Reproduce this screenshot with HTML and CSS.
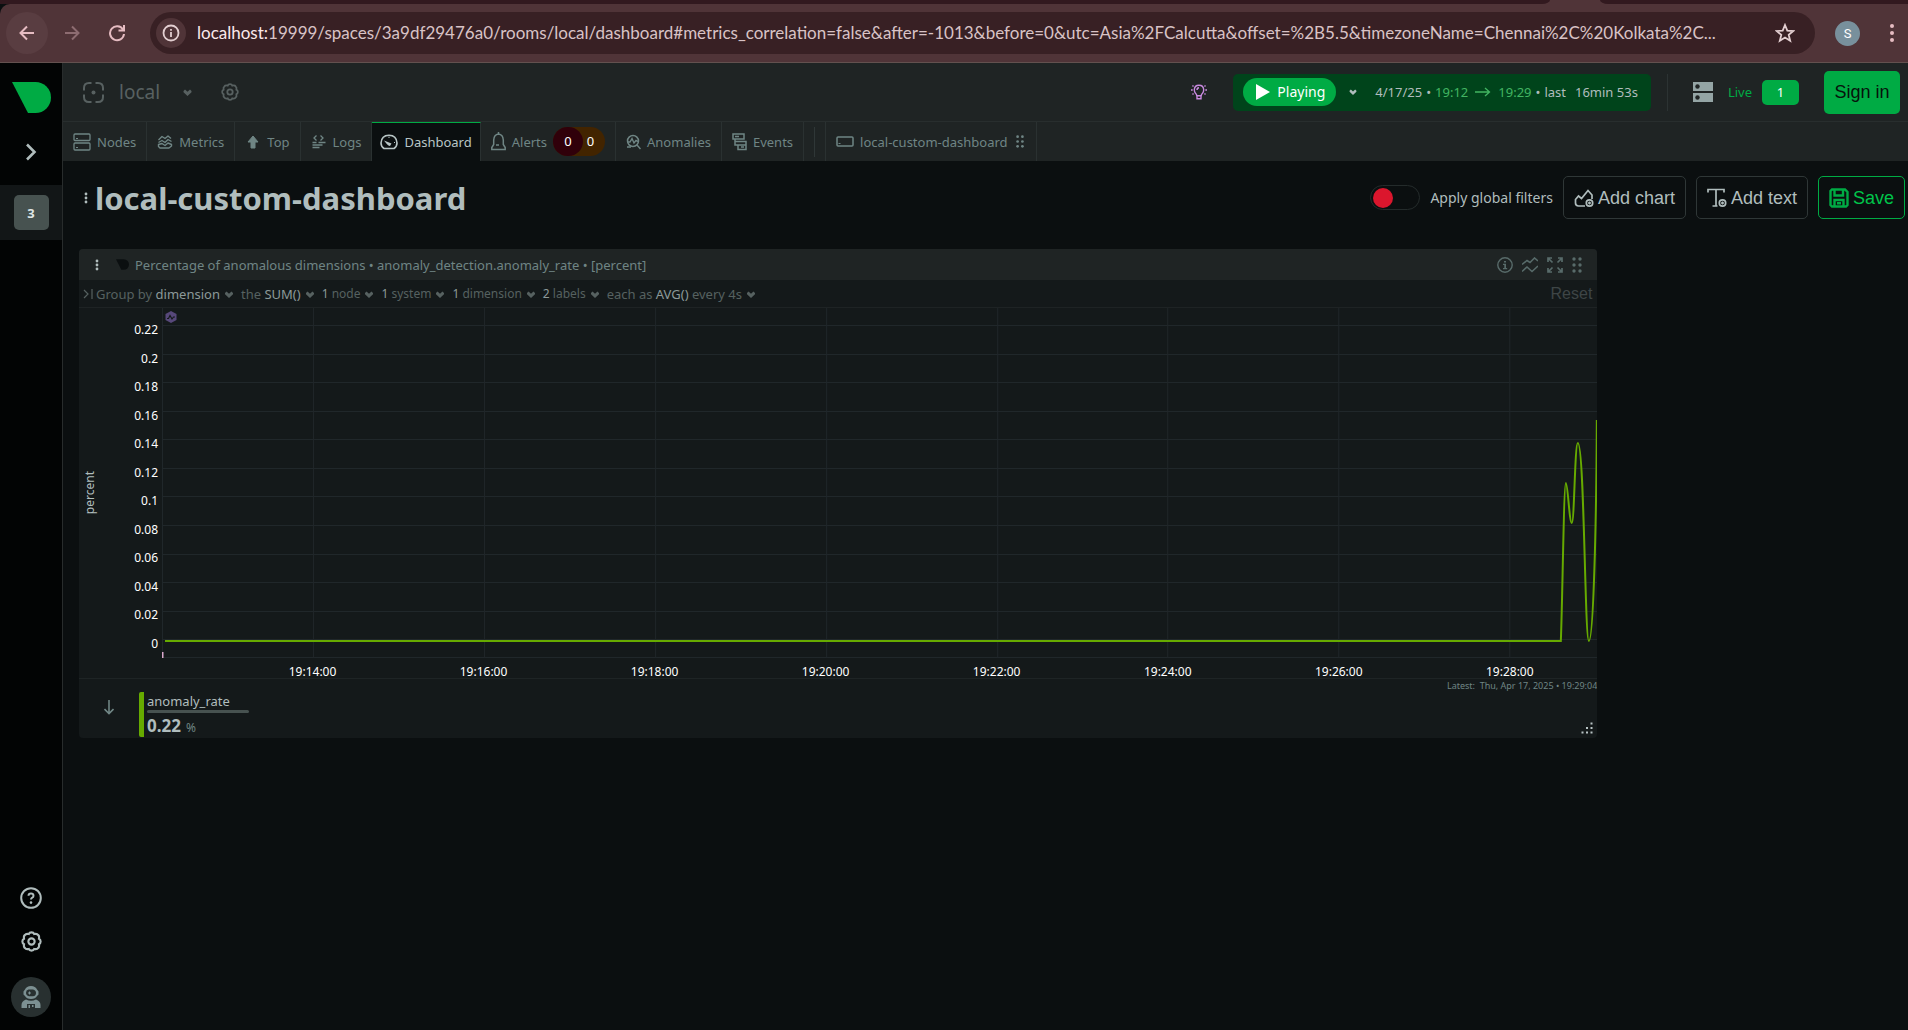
FILE: index.html
```html
<!DOCTYPE html>
<html lang="en">
<head>
<meta charset="utf-8">
<title>local-custom-dashboard</title>
<link rel="stylesheet" href="styles.css">
</head>
<body>
<svg class="defs" aria-hidden="true">
  <symbol id="chev" viewBox="0 0 8 7"><path d="M0 2 1.500.500 4 2.800 6.500.500 8 2 8 3.200 4 7 0 3.200Z" fill="currentColor"/></symbol>
  <symbol id="gear" viewBox="0 0 20 20"><g fill="none" stroke="currentColor" stroke-width="2"><path d="M10 1.300Q12 1.300 12.600 2.900 15.500 2.300 16.200 3.800 17.700 4.600 17.100 7.400 18.700 8.200 18.700 10 18.700 11.800 17.100 12.600 17.700 15.400 16.200 16.200 15.400 17.700 12.600 17.100 12 18.700 10 18.700 8 18.700 7.400 17.100 4.600 17.700 3.800 16.200 2.300 15.400 2.900 12.600 1.300 11.800 1.300 10 1.300 8.200 2.900 7.400 2.300 4.600 3.800 3.800 4.600 2.300 7.400 2.900 8 1.300 10 1.300Z"/><circle cx="10" cy="10" r="3"/></g></symbol>
  <symbol id="mark" viewBox="0 0 39 31"><path d="M0 0H23.500A15.500 15.500 0 0 1 23.500 31H16Z" fill="currentColor"/></symbol>
  <symbol id="grip" viewBox="0 0 10 16"><g fill="currentColor"><circle cx="2" cy="2" r="1.700"/><circle cx="8" cy="2" r="1.700"/><circle cx="2" cy="8" r="1.700"/><circle cx="8" cy="8" r="1.700"/><circle cx="2" cy="14" r="1.700"/><circle cx="8" cy="14" r="1.700"/></g></symbol>
  <symbol id="dots" viewBox="0 0 4 12"><g fill="currentColor"><circle cx="2" cy="2" r="1.400"/><circle cx="2" cy="6" r="1.400"/><circle cx="2" cy="10" r="1.400"/></g></symbol>
</svg>

<div class="tabstrip"><span class="strip-left"></span><span class="strip-right"></span></div>
<div class="browser">
  <button class="nav nav-back" aria-label="Back"><svg width="16" height="16" viewBox="0 0 16 16"><path d="M15 8H2M8 1.500 1.500 8 8 14.500" fill="none" stroke="currentColor" stroke-width="2"/></svg></button>
  <button class="nav nav-fwd" aria-label="Forward"><svg width="16" height="16" viewBox="0 0 16 16"><path d="M1 8H14M8 1.500 14.500 8 8 14.500" fill="none" stroke="currentColor" stroke-width="2"/></svg></button>
  <button class="nav" aria-label="Reload"><svg width="18" height="18" viewBox="0 0 18 18"><path d="M15 5.500A7 7 0 1 0 16 10M16 1V6.500H10.500" fill="none" stroke="currentColor" stroke-width="2"/></svg></button>
  <div class="omnibox">
    <span class="site-info"><svg width="18" height="18" viewBox="0 0 18 18"><circle cx="9" cy="9" r="7.500" fill="none" stroke="currentColor" stroke-width="1.800"/><path d="M9 8V13M9 5V6.800" stroke="currentColor" stroke-width="1.800"/></svg></span>
    <span class="url"><b>localhost:</b>19999/spaces/3a9df29476a0/rooms/local/dashboard#metrics_correlation=false&amp;after=-1013&amp;before=0&amp;utc=Asia%2FCalcutta&amp;offset=%2B5.5&amp;timezoneName=Chennai%2C%20Kolkata%2C...</span>
    <button class="star" aria-label="Bookmark"><svg width="20" height="20" viewBox="0 0 20 20"><path d="M10 2 12.300 7.600 18.300 8 13.700 11.900 15.200 17.700 10 14.500 4.800 17.700 6.300 11.900 1.700 8 7.700 7.600Z" fill="none" stroke="currentColor" stroke-width="1.800"/></svg></button>
  </div>
  <span class="profile">S</span>
  <button class="more" aria-label="Menu"><svg width="6" height="20" viewBox="0 0 6 20"><g fill="currentColor"><circle cx="3" cy="3" r="2"/><circle cx="3" cy="10" r="2"/><circle cx="3" cy="17" r="2"/></g></svg></button>
</div>

<div class="app">
  <aside class="side">
    <a class="logo" href="#" aria-label="Home"><svg width="39" height="31"><use href="#mark"/></svg></a>
    <button class="expand" aria-label="Expand"><svg width="12" height="18" viewBox="0 0 12 18"><path d="M2 1.500 9.500 9 2 16.500" fill="none" stroke="currentColor" stroke-width="2.600"/></svg></button>
    <div class="space"><button class="space-badge">3</button></div>
    <div class="side-foot">
      <button aria-label="Help"><svg width="22" height="22" viewBox="0 0 22 22"><circle cx="11" cy="11" r="9.800" fill="none" stroke="currentColor" stroke-width="2"/><path d="M8.500 8.700Q8.600 6.500 11 6.500T13.500 8.700Q13.500 10 12.200 10.700 11 11.300 11 12.600" fill="none" stroke="currentColor" stroke-width="2"/><circle cx="11" cy="15.600" r="1.300" fill="currentColor"/></svg></button>
      <button aria-label="Settings"><svg width="21" height="21"><use href="#gear"/></svg></button>
      <button class="user" aria-label="Account"><svg width="20" height="24" viewBox="0 0 20 24"><g fill="currentColor"><path fill-rule="evenodd" d="M10 1Q14.500 1 16 4.500L17.500 6.500V9.500L16 11Q14.500 14 10 14T4 11L2.500 9.500V6.500L4 4.500Q5.500 1 10 1ZM7.500 4.500Q5 5 5 7.800T8 11.300H12Q15 11 15 8T12 4.500Z"/><path d="M8 6.500H9V7.500H10V8.500H9V9.500H8V8.500H7V7.500H8Z"/><path fill-rule="evenodd" d="M5 14.500Q10 17 15 14.500 19.500 16 19.500 20V23H.500V20Q.500 16 5 14.500ZM6 19V23H14V19Z"/><path d="M7.500 20H9V23H7.500ZM11 20H12.500V22H11Z"/></g></svg></button>
    </div>
  </aside>

  <main class="main">
    <header class="top">
      <svg class="room-icon" width="21" height="21" viewBox="0 0 21 21"><path d="M8.500 1H6Q1 1 1 6V8.500M12.500 1H15Q20 1 20 6V8.500M8.500 20H6Q1 20 1 15V12.500M12.500 20H15Q20 20 20 15V12.500" fill="none" stroke="currentColor" stroke-width="2"/><circle cx="10.500" cy="10.500" r="2" fill="currentColor"/></svg>
      <span class="room">local</span>
      <button class="room-menu" aria-label="Rooms"><svg width="9" height="7"><use href="#chev"/></svg></button>
      <button class="room-gear" aria-label="Room settings"><svg width="18" height="18"><use href="#gear"/></svg></button>
      <button class="bulb" aria-label="Insights"><svg width="18" height="18" viewBox="0 0 18 18"><g fill="none" stroke="currentColor" stroke-width="1.400"><path d="M6.800 13Q6.800 11.500 5.500 10.300 4.300 9 4.300 6.800 4.500 2.200 9 2.200T13.700 6.800Q13.700 9 12.500 10.300 11.200 11.500 11.200 13M6.200 12.800H11.800M7 13V15.800H11V13M7 7Q7 5 9 4.800"/><path d="M2.500 2.500 3.500 3.500M15.500 2.500 14.500 3.500M1 7H2.700M17 7H15.300M2.500 11.500 3.500 10.500M15.500 11.500 14.500 10.500"/></g></svg></button>
      <div class="timebar">
        <button class="play"><svg width="14" height="16" viewBox="0 0 14 16"><path d="M0 0 14 8 0 16Z" fill="#fff"/></svg>Playing</button>
        <button class="play-menu" aria-label="Play options"><svg width="8" height="6"><use href="#chev"/></svg></button>
        <span class="date">4/17/25</span><span class="bul">•</span><span class="grn">19:12</span><svg class="arrow grn" width="16" height="10" viewBox="0 0 16 10"><path d="M0 5H14M10 1 14.500 5 10 9" fill="none" stroke="currentColor" stroke-width="1.300"/></svg><span class="grn">19:29</span><span class="bul">•</span><span class="last">last</span><span>16min 53s</span>
      </div>
      <span class="vline"></span>
      <svg class="servers" width="20" height="20" viewBox="0 0 20 20"><path d="M0 0H20V9H0ZM0 11H20V20H0Z" fill="#94a5a5"/><circle cx="4.500" cy="4.500" r="2.200" fill="#1f2424"/><circle cx="4.500" cy="15.500" r="2.200" fill="#1f2424"/></svg>
      <span class="live">Live</span>
      <button class="count">1</button>
      <button class="signin">Sign in</button>
    </header>

    <nav class="tabs">
      <a href="#"><svg width="18" height="18" viewBox="0 0 18 18"><g fill="none" stroke="currentColor" stroke-width="1.300"><rect x="1" y="1" width="16" height="6.500" rx="1"/><rect x="1" y="10" width="16" height="7" rx="1"/></g><path d="M3 5.500H5M3 14.500H5" stroke="currentColor"/></svg>Nodes</a>
      <a href="#"><svg width="16" height="16" viewBox="0 0 16 16"><g fill="none" stroke="currentColor" stroke-width="1.400" stroke-linejoin="round"><path d="M1.500 6 5 2.500 8 4.500 11 2 14 4.500M1.500 8.500 5 6.500 8 8.500 11 5.500 14.500 7.500"/><path d="M1.500 12.500V10.500L5 9.500 8 11.500 11 9 14.500 10.500V12L12 14H3Z"/></g></svg>Metrics</a>
      <a href="#"><svg width="16" height="14" viewBox="0 0 14 14"><path d="M7 1 12 7H9V13H5V7H2Z" fill="currentColor" stroke="currentColor" stroke-linejoin="round"/></svg>Top</a>
      <a href="#"><svg width="16" height="15" viewBox="0 0 15 15"><path d="M5 1.500 2.500 4 5 6.500M9 1.500 11.500 4 9 6.500M1 8.500H5M7 8.500H14M1 11H11M1 13.500H8" fill="none" stroke="currentColor" stroke-width="1.300"/></svg>Logs</a>
      <a href="#" class="on"><svg width="18" height="16" viewBox="0 0 18 16"><path d="M4 14.500Q1 12.500 1 9 1.500 1.500 9 1.300 16.500 1.500 17 9 17 12.500 14 14.500Z" fill="none" stroke="currentColor" stroke-width="1.600"/><path d="M4 6.500 11.500 9.500 10 12Q8 12 4 6.500Z" fill="currentColor"/><path d="M14 8.500H15M9 3V4" stroke="currentColor"/></svg>Dashboard</a>
      <a href="#"><svg width="15" height="19" viewBox="0 0 15 19"><path d="M7.500 2Q12 2.500 12.300 8V12.500L14.200 15.500V17.500H.800V15.500L2.700 12.500V8Q3 2.500 7.500 2ZM7.500 2V0M5 13H8" fill="none" stroke="currentColor" stroke-width="1.500"/></svg>Alerts<span class="pills"><i class="crit">0</i><i class="warn">0</i></span></a>
      <a href="#"><svg width="15" height="16" viewBox="0 0 15 16"><circle cx="7" cy="7" r="5.500" fill="none" stroke="currentColor" stroke-width="1.500"/><path d="M11 11 14.500 15M2 8H4L6 4.500 8 9 10 6.500 12 7.500M1 13H5" fill="none" stroke="currentColor" stroke-width="1.400"/></svg>Anomalies</a>
      <a href="#"><svg width="15" height="18" viewBox="0 0 15 18"><path d="M1 1H12V6H1ZM3 8.500H14V12H3ZM3 6V8.500M6 12V16.500H14V12M3 3.500H7M9 14H12" fill="none" stroke="currentColor" stroke-width="1.500"/></svg>Events</a>
      <span class="tab-gap"><span></span></span>
      <a href="#"><svg width="18" height="12" viewBox="0 0 18 12"><rect x="1" y="1" width="16" height="9" rx="1" fill="none" stroke="currentColor" stroke-width="1.500"/><path d="M2.500 7.500H4.500" stroke="currentColor"/></svg>local-custom-dashboard<svg class="tab-grip" width="8" height="13"><use href="#grip"/></svg></a>
    </nav>

    <div class="content">
      <div class="headrow">
        <button class="title-menu" aria-label="Dashboard menu"><svg width="4" height="12"><use href="#dots"/></svg></button>
        <h1>local-custom-dashboard</h1>
        <label class="filters"><input type="checkbox">Apply global filters</label>
        <button class="act"><svg width="20" height="20" viewBox="0 0 20 20"><g fill="none" stroke="currentColor" stroke-width="1.700"><path d="M11 18H4.500Q1.500 18 1.500 15V11.500L4.500 8 7.500 10.500 14 2.500 18 7V11"/><circle cx="15.500" cy="15" r="3.200"/></g><path d="M15.500 13.500V16.500M14 15H17" stroke="currentColor" stroke-width="1.300"/></svg>Add chart</button>
        <button class="act"><svg width="20" height="20" viewBox="0 0 20 20"><g fill="none" stroke="currentColor" stroke-width="1.700"><path d="M1 4.500V1.500H17V4.500M9 1.500V18M5.500 18H10.500"/><circle cx="15.500" cy="15" r="3.200"/></g><path d="M15.500 13.500V16.500M14 15H17" stroke="currentColor" stroke-width="1.300"/></svg>Add text</button>
        <button class="act save"><svg width="20" height="20" viewBox="0 0 20 20"><g fill="none" stroke="#00ab44" stroke-width="2.400"><path d="M3 1.500H16L18.500 4V17L17 18.500H3L1.500 17V3ZM5.500 18.500V12H14.500V18.500M5.500 1.500V7.500H14V1.500M8 15.200H12"/></g></svg>Save</button>
      </div>

      <div class="board">
        <section class="card">
          <div class="card-head">
            <button class="card-menu" aria-label="Chart menu"><svg width="4" height="12"><use href="#dots"/></svg></button>
            <svg class="card-mark" width="13" height="11"><use href="#mark"/></svg>
            <h2>Percentage of anomalous dimensions • anomaly_detection.anomaly_rate • [percent]</h2>
            <button aria-label="Info"><svg width="16" height="16" viewBox="0 0 16 16"><circle cx="8" cy="8" r="7.200" fill="none" stroke="currentColor" stroke-width="1.400"/><path d="M7 4H9V5.600H7ZM6 6.800H9V11H10.200V12.200H6V11H7.300V8H6Z" fill="currentColor"/></svg></button>
            <button aria-label="Chart type"><svg width="16" height="16" viewBox="0 0 16 16"><path d="M0 7.500 5 3.500 8 5.500 12.500 1 16 4M0 14.500 5 10 10 14.500 16 9" fill="none" stroke="currentColor" stroke-width="1.600"/></svg></button>
            <button aria-label="Fullscreen"><svg width="16" height="16" viewBox="0 0 16 16"><path d="M1 5V1H5M1 1 5.500 5.500M11 1H15V5M15 1 10.500 5.500M1 11V15H5M1 15 5.500 10.500M15 11V15H11M15 15 10.500 10.500" fill="none" stroke="currentColor" stroke-width="1.700"/></svg></button>
            <button class="card-grip" aria-label="Move"><svg width="10" height="16"><use href="#grip"/></svg></button>
          </div>
          <div class="query">
            <svg class="collapse" width="10" height="10" viewBox="0 0 10 10"><path d="M1 1 5 5 1 9M9 0V10" fill="none" stroke="currentColor" stroke-width="1.200"/></svg>
            <button>Group by <b>dimension</b><svg width="8" height="7"><use href="#chev"/></svg></button>
            <button>the <b>SUM()</b><svg width="8" height="7"><use href="#chev"/></svg></button>
            <button class="scope"><b>1</b> node<svg width="8" height="7"><use href="#chev"/></svg></button>
            <button class="scope"><b>1</b> system<svg width="8" height="7"><use href="#chev"/></svg></button>
            <button class="scope"><b>1</b> dimension<svg width="8" height="7"><use href="#chev"/></svg></button>
            <button class="scope"><b>2</b> labels<svg width="8" height="7"><use href="#chev"/></svg></button>
            <button>each as <b>AVG()</b> every 4s<svg width="8" height="7"><use href="#chev"/></svg></button>
            <button class="reset">Reset</button>
          </div>
          <div class="plotrow">
            <div class="unit"><span>percent</span></div>
            <div class="yaxis"><span>0.22</span><span>0.2</span><span>0.18</span><span>0.16</span><span>0.14</span><span>0.12</span><span>0.1</span><span>0.08</span><span>0.06</span><span>0.04</span><span>0.02</span><span>0</span></div>
            <div class="plot">
              <svg class="lines" viewBox="0 0 1435 350" preserveAspectRatio="none">
                <path class="grid" d="M0 17.500H1435M0 46.500H1435M0 74.500H1435M0 103.500H1435M0 131.500H1435M0 160.500H1435M0 188.500H1435M0 217.500H1435M0 246.500H1435M0 274.500H1435M0 303.500H1435M0 331.500H1435M0 349.500H1435M.500 0V350M151.500 0V350M322.500 0V350M493.500 0V350M664.500 0V350M835.500 0V350M1005.500 0V350M1176.500 0V350M1347.500 0V350"/>
                <path class="tick" d="M.500 344V350"/>
                <path class="series" d="M3 333H1398.500C1400 300 1401.500 175 1403.500 175 1405.500 175 1407 215 1409.500 215 1412 215 1412.500 135 1415.500 135 1422 135 1422.500 333 1426.500 333 1431 333 1434 220 1434.500 112"/>
              </svg>
              <svg class="hex" width="12" height="12" viewBox="0 0 12 12"><path d="M6 0 11.500 3V9L6 12 .500 9V3Z" fill="#57487a"/><path d="M2 7.500H3.500L5 4.500 7 8 8.500 6H10" fill="none" stroke="#14191a" stroke-width="1.200"/></svg>
            </div>
          </div>
          <div class="xaxis"><span>19:14:00</span><span>19:16:00</span><span>19:18:00</span><span>19:20:00</span><span>19:22:00</span><span>19:24:00</span><span>19:26:00</span><span>19:28:00</span></div>
          <div class="foot">
            <svg class="down" width="10" height="15" viewBox="0 0 10 15"><path d="M5 0V13M.500 9 5 13.500 9.500 9" fill="none" stroke="currentColor" stroke-width="1.600"/></svg>
            <div class="dim">
              <span class="dim-name">anomaly_rate</span>
              <span class="dim-bar"></span>
              <span class="dim-val"><b>0.22</b> %</span>
            </div>
            <div class="foot-right">
              <span class="latest">Latest:&nbsp; Thu, Apr 17, 2025 • 19:29:04</span>
              <svg class="resize" width="12" height="12" viewBox="0 0 12 12"><path d="M9.500.500H11.500V2.500H9.500ZM5 5H7V7H5ZM9.500 5H11.500V7H9.500ZM.500 9.500H2.500V11.500H.500ZM5 9.500H7V11.500H5ZM9.500 9.500H11.500V11.500H9.500Z" fill="#b8c4c4"/></svg>
            </div>
          </div>
        </section>
      </div>
    </div>
  </main>
</div>
</body>
</html>
```
FILE: styles.css
```css
* { box-sizing: border-box; }
body {
  margin: 0;
  min-height: 100vh;
  display: flex;
  flex-direction: column;
  background: #0b0f10;
  color: #b0bdbd;
  font: 13px/20px "Noto Sans", "Open Sans", sans-serif;
}
button { border: 0; padding: 0; background: none; color: inherit; font: inherit; display: flex; align-items: center; flex: none; white-space: nowrap; }
a { color: inherit; text-decoration: none; }
svg { flex: none; display: block; }
b { font-weight: inherit; }
.defs { position: absolute; width: 0; height: 0; }

/* browser chrome */
.tabstrip { display: flex; justify-content: space-between; height: 4px; background: #503438; }
.strip-left { flex: 1; background: #32191f; border-bottom-right-radius: 8px 4px; }
.strip-right { width: 308px; margin-left: 50px; background: #32191f; border-bottom-left-radius: 8px 4px; }
.browser { display: flex; align-items: center; height: 59px; padding: 0 13px 0 6px; background: #503438; border-bottom: 1px solid #63514f; color: #e6bcc2; border-top-left-radius: 10px; }
.nav { width: 42px; height: 42px; border-radius: 50%; justify-content: center; margin-right: 3px; }
.nav-back { background: #593d41; }
.nav-fwd { color: #8d6c71; }
.omnibox { flex: 1; min-width: 0; display: flex; align-items: center; height: 42px; margin-left: 9px; padding: 0 20px 0 6px; border-radius: 21px; background: #382024; color: #e3cfd1; }
.site-info { width: 30px; height: 30px; display: flex; align-items: center; justify-content: center; border-radius: 50%; background: #503438; flex: none; }
.url { flex: 1; min-width: 0; margin-left: 11px; overflow: hidden; white-space: nowrap; font-family: Lato, "Noto Sans", sans-serif; font-size: 17px; line-height: 26px; color: #d9c3c6; }
.url b { color: #fbe9eb; }
.profile { width: 25px; height: 25px; margin-left: 20px; border-radius: 50%; background: #78909c; color: #fff; text-align: center; line-height: 25px; font-family: Roboto, sans-serif; }
.more { margin-left: 29px; }

/* shell */
.app { flex: 1; display: flex; }
.side { width: 63px; flex: none; display: flex; flex-direction: column; align-items: center; background: #020404; border-right: 1px solid #282c2c; }
.logo { margin: 19px 0 30px; color: #00ab44; }
.expand { color: #b0bdbd; margin-bottom: 24px; }
.space { align-self: stretch; display: flex; align-items: center; justify-content: center; height: 55px; background: #121617; }
.space-badge { width: 35px; height: 35px; border-radius: 5px; background: #475250; color: #dfe6e6; font-weight: 700; justify-content: center; }
.side-foot { margin-top: auto; padding-bottom: 13px; display: flex; flex-direction: column; align-items: center; gap: 22px; color: #b0bdbd; }
.user { width: 40px; height: 40px; margin-top: 3px; border-radius: 50%; background: #283030; color: #7c9092; justify-content: center; }
.main { flex: 1; min-width: 0; }

/* header */
.top { display: flex; align-items: center; height: 59px; padding: 0 8px 0 20px; background: #1f2424; border-bottom: 1px solid #282e2e; }
.room-icon, .room-menu, .room-gear { color: #586161; }
.room { margin-left: 15px; font-size: 19px; line-height: 24px; color: #586161; }
.room-menu { margin-left: 23px; }
.room-gear { margin-left: 29px; }
.bulb { margin-left: auto; color: #c98ae0; }
.timebar { display: flex; align-items: center; height: 37px; margin-left: 25px; padding: 0 13px 0 10px; border-radius: 5px; background: #00441b; white-space: nowrap; }
.play { gap: 7px; height: 28px; padding: 0 11px 0 13px; border-radius: 14px; background: #00ab44; color: #fff; font-size: 14px; }
.play-menu { margin: 0 18px 0 13px; }
.bul { margin: 0 4px; }
.grn { color: #42b562; }
.arrow { margin: 0 7px; }
.last { margin-right: 9px; }
.vline { width: 1px; height: 37px; margin: 0 25px 0 16px; background: #2c3333; }
.live { margin: 0 10px 0 15px; color: #00ab44; }
.count { width: 37px; height: 25px; border-radius: 5px; background: #00ab44; color: #fff; justify-content: center; }
.signin { width: 76px; height: 43px; margin-left: 25px; border-radius: 5px; background: #00ab44; color: #07130c; justify-content: center; font: 18px/22px "Liberation Sans", sans-serif; }

/* tabs */
.tabs { display: flex; height: 39px; background: #1f2424; color: #6f8584; white-space: nowrap; }
.tabs a { display: flex; align-items: center; gap: 6px; padding: 0 10px; border-right: 1px solid #2a3131; }
.tabs .on { padding: 0 8px; background: #0b0f10; color: #b9c6c6; border-top: 1px solid #00ab44; }
.pills { display: flex; border-radius: 15px; background: #422400; }
.pills i { height: 29px; line-height: 29px; text-align: center; font-style: normal; color: #fff; }
.pills .crit { width: 30px; border-radius: 15px; background: #30000a; }
.pills .warn { width: 22px; padding-right: 7px; }
.tab-gap { width: 22px; display: flex; align-items: center; justify-content: center; border-right: 1px solid #2a3131; }
.tab-gap span { width: 1px; height: 30px; background: #2f3737; }
.tab-grip { margin: 0 2px; }

/* content */
.content { padding: 15px 3px 0 16px; }
.headrow { display: flex; align-items: center; gap: 10px; height: 43px; }
.title-menu { margin: 0 -3px 0 5px; }
h1 { flex: 1; margin: 0; font-size: 31px; line-height: 42px; font-weight: 700; color: #b0bdbd; }
.filters { display: flex; align-items: center; gap: 10px; font-size: 14px; }
.filters input { appearance: none; width: 50px; height: 25px; margin: 0; padding: 2px; border: 1px solid #242b2b; border-radius: 13px; }
.filters input::before { content: ""; display: block; width: 20px; height: 20px; border-radius: 50%; background: #db162d; }
.act { height: 43px; gap: 4px; padding: 0 10px; border: 1px solid #2f3737; border-radius: 5px; font: 18px/22px "Liberation Sans", sans-serif; }
.save { color: #00c44a; border-color: #00ab44; }

/* chart */
.board { display: grid; grid-template-columns: 5fr 1fr; gap: 4px; margin-top: 30px; }
.card { border-radius: 4px; background: #14191a; overflow: hidden; }
.card-head { display: flex; align-items: center; gap: 9px; height: 31px; padding: 0 15px 0 16px; background: #1f2424; color: #586b6a; }
.card-menu { color: #b0bdbd; }
.card-mark { margin-left: 8px; color: #0b0f10; }
h2 { flex: 1; margin: 0 0 0 -3px; font-size: 13px; line-height: 20px; font-weight: 400; color: #6f8584; }
.query { display: flex; align-items: center; gap: 8px; height: 28px; padding: 1px 5px 0 4px; border-bottom: 1px solid #1e2324; color: #566160; font-size: 13px; }
.query button { white-space: pre; }
.query b { color: #8c9999; }
.query button svg { margin-left: 5px; }
.query .scope { font-size: 12px; }
.collapse { margin-right: -5px; }
.query .reset { margin-left: auto; font: 16px/20px "Liberation Sans", sans-serif; color: #3e4546; }
.plotrow { display: flex; height: 350px; }
.unit { width: 21px; display: flex; align-items: center; justify-content: center; padding-top: 20px; }
.unit span { writing-mode: vertical-rl; transform: rotate(180deg); font-size: 12px; }
.yaxis { width: 62px; display: flex; flex-direction: column; padding: 8px 4px 0 0; text-align: right; color: #fff; font-size: 12px; }
.yaxis span { flex: 1; display: flex; align-items: center; justify-content: flex-end; }
.plot { flex: 1; position: relative; }
.lines { width: 100%; height: 100%; }
.lines path { fill: none; vector-effect: non-scaling-stroke; }
.lines .grid { stroke: #20272a; }
.lines .tick { stroke: #d9a8cc; stroke-width: 2; }
.lines .series { stroke: #66aa00; stroke-width: 2; }
.hex { position: absolute; left: 3px; top: 3px; }
.xaxis { display: grid; grid-template-columns: repeat(8, 1fr); height: 21px; padding: 5px 2px 0 148px; border-bottom: 1px solid #1e2425; text-align: center; color: #fff; font-size: 12px; line-height: 18px; }
.foot { display: flex; align-items: flex-start; height: 59px; }
.down { margin: 21px 25px 0; color: #6f8584; }
.dim { display: flex; flex-direction: column; width: 110px; height: 45px; margin-top: 13px; border-left: 5px solid #66aa00; border-radius: 2px; padding-left: 3px; line-height: 18px; }
.dim-bar { flex: none; height: 3px; border-radius: 2px; background: #475250; }
.dim-val { line-height: 26px; font-size: 12px; color: #6f8584; }
.dim-val b { font-size: 17px; font-weight: 700; color: #b0bdbd; margin-right: 2px; }
.foot-right { margin-left: auto; align-self: stretch; display: flex; flex-direction: column; align-items: flex-end; justify-content: space-between; padding-bottom: 4px; }
.latest { font-size: 9px; line-height: 14px; color: #6f8584; }
.resize { margin-right: 4px; }
```
